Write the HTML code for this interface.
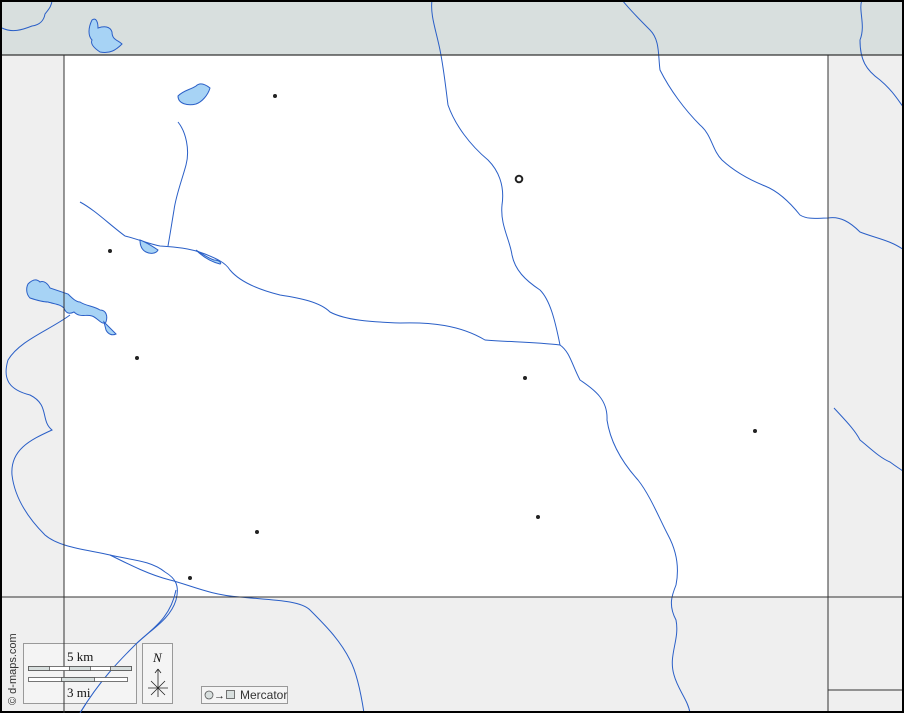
<!DOCTYPE html>
<html><head><meta charset="utf-8"><style>
html,body{margin:0;padding:0;background:#fff;}
svg{display:block;}
text{font-family:"Liberation Serif",serif;}
</style></head><body>
<svg width="904" height="713" viewBox="0 0 904 713" xmlns="http://www.w3.org/2000/svg">
<rect x="0" y="0" width="904" height="713" fill="#efefef"/>
<rect x="0" y="0" width="904" height="55" fill="#d8dfde"/>
<rect x="64" y="55" width="764" height="542" fill="#fff"/>
<g fill="none" stroke="#2a5fc7" stroke-width="1">
<path d="M2,28 C12,33 22,30 32,26 C40,25 44,20 45,14 C48,10 52,6 52,0"/>
<path d="M432,0 C430,15 436,30 440,50 C444,70 446,90 448,105 C455,125 470,145 488,160 C498,170 505,185 502,205 C500,225 510,240 512,255 C515,270 525,280 540,290 C550,300 555,320 560,345"/>
<path d="M622,0 C630,10 640,20 650,30 C660,40 658,55 660,70 C670,90 685,110 700,125 C712,135 712,150 722,160 C735,172 750,180 765,186 C780,192 792,205 800,215 C808,220 818,218 828,218 C840,216 850,222 860,232 C875,238 890,240 904,250"/>
<path d="M862,0 C858,10 866,25 860,40 C860,60 866,70 880,80 C892,90 898,100 904,108"/>
<path d="M80,202 C95,210 110,225 125,236 C140,240 150,244 160,246 C175,247 190,248 205,254 C215,258 225,262 230,270 C240,282 260,290 280,295 C300,298 320,302 330,312 C345,320 370,322 400,323 C430,322 460,325 485,340 C510,342 535,342 560,345 C570,352 572,365 580,380 C595,390 608,400 607,420 C610,440 620,460 638,480 C650,495 660,520 668,535 C675,548 680,565 676,585 C672,595 668,605 676,620 C680,640 668,655 674,675 C678,690 688,700 690,713"/>
<path d="M178,122 C186,132 190,150 186,165 C182,180 176,195 174,210 C172,222 170,235 168,246"/>
<path d="M70,315 C50,330 20,340 8,360 C2,380 10,390 30,395 C50,405 40,420 52,430 C30,440 10,450 12,475 C15,500 30,520 45,535 C60,548 90,550 110,555 C130,560 150,560 165,572 C175,578 180,585 176,600 C170,620 150,630 135,645 C120,660 100,680 80,713"/>
<path d="M110,555 C130,565 150,575 170,580 C190,585 210,595 240,597"/>
<path d="M240,597 C270,600 300,600 310,610 C325,625 340,640 350,660 C358,675 362,700 364,713"/>
<path d="M834,408 C845,420 855,430 860,440 C870,448 880,458 890,462 C898,468 902,470 904,472"/>
</g>
<g fill="#a7d3f5" stroke="#2a5fc7" stroke-width="1">
<path d="M92,20 C96,17 98,22 98,28 C104,26 110,26 112,32 C112,40 118,40 122,44 C116,50 110,54 100,52 C94,48 90,44 92,40 C88,36 88,28 92,20Z"/>
<path d="M178,96 C184,90 190,90 196,86 C200,82 205,84 210,88 C208,95 202,102 196,104 C188,106 178,104 178,96Z"/>
<path d="M28,284 C32,280 36,278 40,282 C44,280 48,284 50,288 C56,290 62,292 68,294 C72,298 76,302 80,302 C86,306 94,306 100,310 C106,310 108,316 106,322 C102,326 98,318 92,316 C86,314 80,318 74,312 C70,314 66,314 64,308 C60,304 54,304 48,302 C42,302 36,300 30,298 C26,294 26,288 28,284Z"/>
<path d="M104,322 C108,326 112,330 116,334 C112,336 108,334 106,330Z"/>
<path d="M140,240 C146,242 152,246 158,250 C156,254 150,254 146,252 C142,250 140,246 140,240Z"/>
<path d="M196,250 C202,254 208,258 214,260 C220,260 222,264 220,264 C212,262 204,258 196,250Z"/>
</g>
<g fill="#222">
<circle cx="275" cy="96" r="2"/><circle cx="110" cy="251" r="2"/><circle cx="137" cy="358" r="2"/>
<circle cx="525" cy="378" r="2"/><circle cx="755" cy="431" r="2"/><circle cx="538" cy="517" r="2"/>
<circle cx="257" cy="532" r="2"/><circle cx="190" cy="578" r="2"/>
</g>
<circle cx="519" cy="179" r="3.3" fill="#fff" stroke="#222" stroke-width="2"/>
<g stroke="#333" fill="none">
<line x1="0" y1="55" x2="904" y2="55" stroke-width="1.2"/>
<line x1="0" y1="597" x2="904" y2="597" stroke-width="1"/>
<line x1="64" y1="55" x2="64" y2="713" stroke-width="1"/>
<line x1="828" y1="55" x2="828" y2="713" stroke-width="1"/>
<line x1="828" y1="690" x2="904" y2="690" stroke-width="1"/>
</g>
<rect x="1" y="1" width="902" height="711" fill="none" stroke="#000" stroke-width="2"/>
<g stroke="#999" fill="#f4f4f4">
<rect x="23.5" y="643.5" width="113" height="60"/>
<rect x="142.5" y="643.5" width="30" height="60"/>
<rect x="201.5" y="686.5" width="86" height="17"/>
</g>
<line x1="64" y1="643" x2="64" y2="713" stroke="#333"/>
<path d="M176,590 C170,620 150,630 135,645 C120,660 100,680 80,713" fill="none" stroke="#2a5fc7"/>
<g stroke="#555" stroke-width="0.8">
<rect x="28.5" y="666.5" width="103" height="4" fill="#fff"/>
<rect x="28.5" y="666.5" width="21" height="4" fill="#d8dfde"/>
<rect x="69.5" y="666.5" width="21" height="4" fill="#d8dfde"/>
<rect x="110.5" y="666.5" width="21" height="4" fill="#d8dfde"/>
<rect x="28.5" y="677.5" width="99" height="4" fill="#fff"/>
<rect x="61.5" y="677.5" width="33" height="4" fill="#d8dfde"/>
</g>
<text x="67" y="661" font-size="13" fill="#111">5 km</text>
<text x="67" y="697" font-size="13" fill="#111">3 mi</text>
<text x="153" y="662" font-size="13" font-style="italic" fill="#111">N</text>
<g stroke="#222" stroke-width="0.8" fill="none">
<line x1="158" y1="669" x2="158" y2="697"/><line x1="155" y1="673" x2="158" y2="669"/><line x1="161" y1="673" x2="158" y2="669"/>
<line x1="148" y1="688" x2="168" y2="688"/><line x1="151" y1="681" x2="165" y2="695"/><line x1="165" y1="681" x2="151" y2="695"/>
</g>
<circle cx="209" cy="695" r="4" fill="#d8dfde" stroke="#555" stroke-width="0.8"/>
<text x="214" y="699" font-size="11" font-family="Liberation Sans,sans-serif" fill="#222">→</text>
<rect x="226.5" y="690.5" width="8" height="8" fill="#d8dfde" stroke="#555" stroke-width="0.8"/>
<text x="240" y="699" font-size="12" font-family="Liberation Sans,sans-serif" fill="#333" style="font-family:'Liberation Sans',sans-serif">Mercator</text>
<text transform="translate(16,705) rotate(-90)" font-size="11" fill="#333" style="font-family:'Liberation Sans',sans-serif">© d-maps.com</text>
</svg>
</body></html>
